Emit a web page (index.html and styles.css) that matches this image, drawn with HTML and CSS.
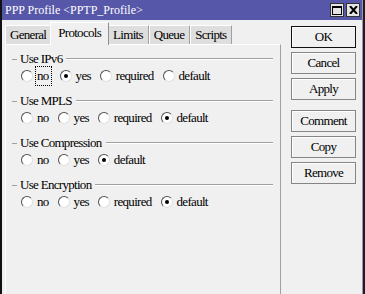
FILE: index.html
```html
<!DOCTYPE html>
<html lang="en">
<head>
  <meta charset="UTF-8" />
  <title>PPP Profile</title>
  <link rel="stylesheet" href="styles.css">
</head>
<body>
  <div class="window">
    <div class="titlebar">
      <span class="title">PPP Profile &lt;PPTP_Profile&gt;</span>
      <div class="title-buttons">
        <span class="tbtn">
          <svg width="10" height="9" viewBox="0 0 10 9"><rect x="0.5" y="0.5" width="9" height="8" fill="none" stroke="#000"/><rect x="0" y="0" width="10" height="2" fill="#000"/></svg>
        </span>
        <span class="tbtn">
          <svg width="9" height="8" viewBox="0 0 9 8"><path d="M1 0 L8 8 M8 0 L1 8" stroke="#000" stroke-width="2"/></svg>
        </span>
      </div>
    </div>

    <div class="body">
      <div class="left">
        <!-- Tabs -->
        <div class="tabs">
          <span class="tab">General</span>
          <span class="tab active">Protocols</span>
          <span class="tab">Limits</span>
          <span class="tab">Queue</span>
          <span class="tab">Scripts</span>
        </div>

        <div class="panel">
          <div class="group">
            <div class="legend"><span class="dash"></span><span class="label">Use IPv6</span><span class="rule"></span></div>
            <div class="options">
              <span class="opt"><span class="radio"></span><span class="focus">no</span></span>
              <span class="opt"><span class="radio on"></span><span>yes</span></span>
              <span class="opt"><span class="radio"></span><span>required</span></span>
              <span class="opt"><span class="radio"></span><span>default</span></span>
            </div>
          </div>

          <div class="group">
            <div class="legend"><span class="dash"></span><span class="label">Use MPLS</span><span class="rule"></span></div>
            <div class="options">
              <span class="opt"><span class="radio"></span><span>no</span></span>
              <span class="opt"><span class="radio"></span><span>yes</span></span>
              <span class="opt"><span class="radio"></span><span>required</span></span>
              <span class="opt"><span class="radio on"></span><span>default</span></span>
            </div>
          </div>

          <div class="group">
            <div class="legend"><span class="dash"></span><span class="label">Use Compression</span><span class="rule"></span></div>
            <div class="options">
              <span class="opt"><span class="radio"></span><span>no</span></span>
              <span class="opt"><span class="radio"></span><span>yes</span></span>
              <span class="opt"><span class="radio on"></span><span>default</span></span>
            </div>
          </div>

          <div class="group">
            <div class="legend"><span class="dash"></span><span class="label">Use Encryption</span><span class="rule"></span></div>
            <div class="options">
              <span class="opt"><span class="radio"></span><span>no</span></span>
              <span class="opt"><span class="radio"></span><span>yes</span></span>
              <span class="opt"><span class="radio"></span><span>required</span></span>
              <span class="opt"><span class="radio on"></span><span>default</span></span>
            </div>
          </div>
        </div>
      </div>

      <!-- Buttons -->
      <div class="side">
        <button class="btn default">OK</button>
        <button class="btn">Cancel</button>
        <button class="btn">Apply</button>
        <button class="btn spaced">Comment</button>
        <button class="btn">Copy</button>
        <button class="btn">Remove</button>
      </div>
    </div>
  </div>
</body>
</html>
```
FILE: styles.css
```css
body {
  margin: 0;
  background-color: #1c1c2a;
  font-family: 'Liberation Serif', 'Times New Roman', serif;
  font-size: 13px;
  letter-spacing: -0.7px;
  color: #000;
}

.window {
  width: 360px;
  height: 294px;
  background: #f0f0f0;
  border-left: 2px solid #111;
  border-right: 1px solid #9a9a9a;
  display: flex;
  flex-direction: column;
}

.titlebar {
  height: 20px;
  background: #5757a9;
  display: flex;
  align-items: center;
  justify-content: space-between;
  padding: 0 2px 0 3px;
}

.title {
  color: white;
  font-size: 12px;
  letter-spacing: 0;
}

.title-buttons {
  display: flex;
  gap: 2px;
}

.tbtn {
  width: 14px;
  height: 14px;
  box-sizing: border-box;
  background: #e4e4e4;
  border: 1px solid #333;
  display: flex;
  align-items: center;
  justify-content: center;
}

.body {
  flex: 1;
  display: flex;
}

.left {
  width: 276px;
  padding-left: 3px;
  display: flex;
  flex-direction: column;
}

.tabs {
  display: flex;
  align-items: flex-end;
  height: 24px;
}

.tab {
  height: 18px;
  line-height: 18px;
  padding: 0 5px 0 4px;
  background: #dedede;
  border-top: 1px solid #fff;
  border-left: 1px solid #fff;
  border-right: 1px solid #a0a0a0;
}

.tab:first-child {
  padding-right: 4px;
}

.tab.active {
  height: 22px;
  line-height: 20px;
  background: #f0f0f0;
  padding: 0 7px;
  margin: 0 -1px -1px;
  position: relative;
  border-right-color: #909090;
}

.panel {
  flex: 1;
  border-top: 1px solid #fff;
  border-left: 1px solid #fff;
  border-right: 1px solid #a0a0a0;
  padding: 7px 7px 0 6px;
}

.group {
  margin-bottom: 10px;
}

.legend {
  display: flex;
  align-items: center;
  height: 14px;
}

.dash {
  width: 5px;
  border-top: 1px solid #a0a0a0;
}

.label {
  padding: 0 4px 0 3px;
}

.rule {
  flex: 1;
  border-top: 1px solid #a0a0a0;
  border-bottom: 1px solid #fff;
}

.options {
  display: flex;
  height: 16px;
  margin-top: 2px;
  padding-left: 9px;
  gap: 9px;
}

.opt {
  display: flex;
  align-items: center;
  gap: 4px;
}

.radio {
  width: 12px;
  height: 12px;
  box-sizing: border-box;
  border-radius: 50%;
  background: #fff;
  border: 1px solid;
  border-color: #505050 #e0e0e0 #e0e0e0 #505050;
  position: relative;
}

.radio.on::after {
  content: '';
  position: absolute;
  left: 3px;
  top: 3px;
  width: 4px;
  height: 4px;
  border-radius: 50%;
  background: #000;
}

.focus {
  outline: 1px dotted #000;
  padding: 1px 2px 1px 1px;
  margin-left: -1px;
}

.side {
  display: flex;
  flex-direction: column;
  padding: 6px 0 0 10px;
  gap: 4px;
}

.btn {
  width: 65px;
  height: 22px;
  padding: 0;
  font-family: inherit;
  font-size: 13px;
  letter-spacing: -0.7px;
  background: #f0f0f0;
  border: 1px solid #858585;
  box-shadow: inset 1px 1px 0 #fff;
  color: #000;
}

.btn.default {
  border-color: #111;
}

.btn.spaced {
  margin-top: 6px;
}
```
